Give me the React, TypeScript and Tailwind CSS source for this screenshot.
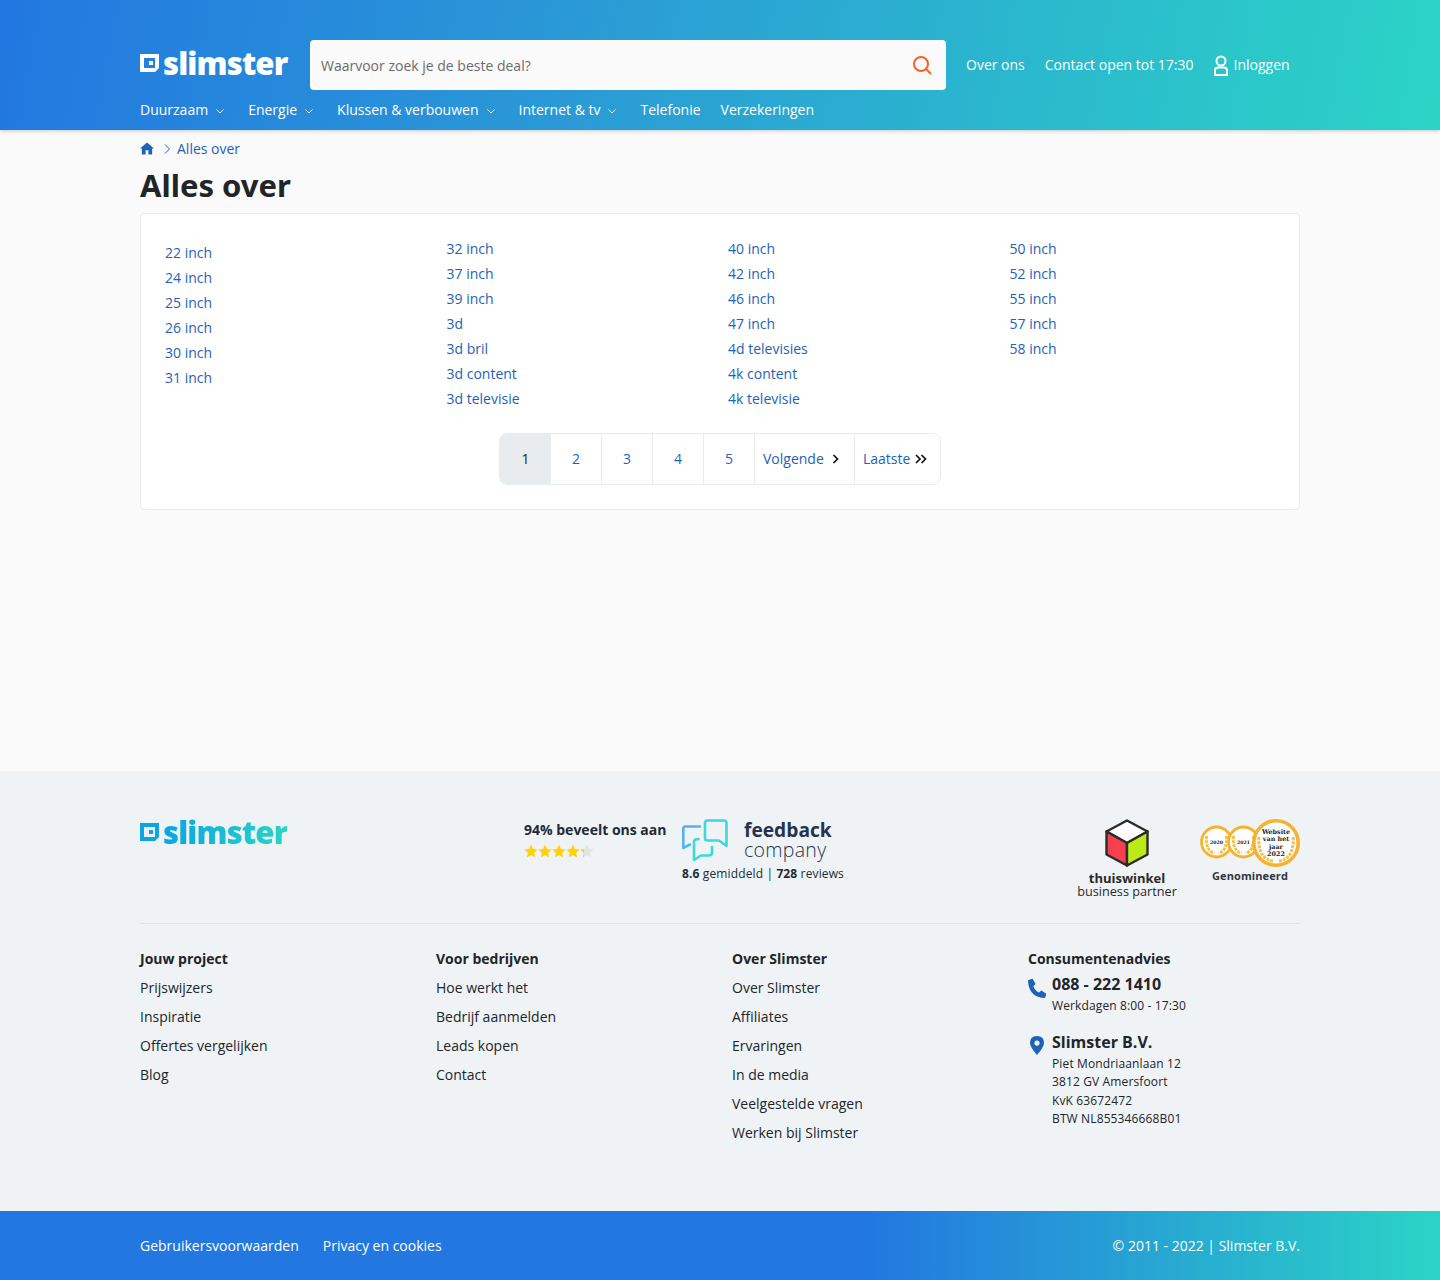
import React from "react";

const Logo = ({ grad, className = "" }: { grad: boolean; className?: string }) => (
  <div className={`flex h-[30px] w-[150px] items-center ${className}`}>
    <svg width="19" height="18" viewBox="0 0 19 18" className="shrink-0">
      <path
        fillRule="evenodd"
        d="M0 0H19V14L15 18H0ZM4 4V14H15V4Z"
        fill={grad ? "#0ca5e4" : "#fff"}
      />
      <rect x="9" y="7" width="4" height="4" fill={grad ? "#0ca5e4" : "#fff"} />
    </svg>
    <span
      className={`ml-[4px] font-['Open_Sans',sans-serif] text-[31px] leading-[30px] font-extrabold tracking-[-0.85px] ${
        grad
          ? "bg-gradient-to-r from-[#0ca5e4] to-[#2bd4c5] bg-clip-text text-transparent"
          : "text-white"
      }`}
    >
      slimster
    </span>
  </div>
);

const Chevron = () => (
  <svg width="8" height="5" viewBox="0 0 8 5" className="mt-[2px] mr-[4px] ml-[8px]" fill="none" stroke="#fff" strokeWidth="1">
    <path d="M0.5 0.5L4 4L7.5 0.5" />
  </svg>
);

const nav: [string, boolean][] = [
  ["Duurzaam", true],
  ["Energie", true],
  ["Klussen & verbouwen", true],
  ["Internet & tv", true],
  ["Telefonie", false],
  ["Verzekeringen", false],
];

const col1 = ["22 inch", "24 inch", "25 inch", "26 inch", "30 inch", "31 inch"];
const col2 = ["32 inch", "37 inch", "39 inch", "3d", "3d bril", "3d content", "3d televisie"];
const col3 = ["40 inch", "42 inch", "46 inch", "47 inch", "4d televisies", "4k content", "4k televisie"];
const col4 = ["50 inch", "52 inch", "55 inch", "57 inch", "58 inch"];

const LinkCol = ({ items, className = "" }: { items: string[]; className?: string }) => (
  <ul className={className}>
    {items.map((t) => (
      <li key={t} className="h-[25px] leading-[25px] text-[#1e62b8]">
        {t}
      </li>
    ))}
  </ul>
);

const FootCol = ({ title, items }: { title: string; items: string[] }) => (
  <div>
    <div className="h-[29px] leading-[29px] font-bold text-[#212529]">{title}</div>
    {items.map((t) => (
      <div key={t} className="h-[29px] leading-[29px] text-[#212529]">
        {t}
      </div>
    ))}
  </div>
);

const STAR = "M12 1l3.4 7.6 8.1.8-6.1 5.4 1.8 8.2L12 18.8 4.8 23l1.8-8.2L.5 9.4l8.1-.8z";
const Star = ({ fill }: { fill: string }) => (
  <svg width="14" height="14" viewBox="0 0 24 24">
    <defs>
      <linearGradient id="part" x1="0" x2="1" y1="0" y2="0">
        <stop offset="0.25" stopColor="#fdd20a" />
        <stop offset="0.25" stopColor="#dfe3e6" />
      </linearGradient>
    </defs>
    <path d={STAR} fill={fill} />
  </svg>
);

const Medal = ({ cx, cy, r, lines }: { cx: number; cy: number; r: number; lines: string[] }) => {
  const big = r > 20;
  const size = big ? 6.4 : 4.6;
  return (
    <g>
      <circle cx={cx} cy={cy} r={r} fill="#fff" stroke="#f4b331" strokeWidth={big ? 3.6 : 2.8} />
      <path
        d={`M${cx - r + 5} ${cy - 6}Q${cx - r + 4} ${cy + r - 6} ${cx - 2} ${cy + r - 4}`}
        fill="none"
        stroke="#f2c14e"
        strokeWidth="3"
        strokeDasharray="3 1"
      />
      <path
        d={`M${cx + r - 5} ${cy - 6}Q${cx + r - 4} ${cy + r - 6} ${cx + 2} ${cy + r - 4}`}
        fill="none"
        stroke="#f2c14e"
        strokeWidth="3"
        strokeDasharray="3 1"
      />
      {lines.map((l, i) => (
        <text
          key={l}
          x={cx}
          y={cy + 2 + (i - (lines.length - 1) / 2) * 7.2}
          textAnchor="middle"
          fontSize={size}
          fontWeight="700"
          fontFamily="'DejaVu Serif', serif"
          fill="#222"
        >
          {l}
        </text>
      ))}
    </g>
  );
};

export default function App() {
  return (
    <div className="flex min-h-[1280px] flex-col bg-[#fafafa] font-['Open_Sans',sans-serif] text-[14px] text-[#212529]">
      <header className="relative z-10 h-[130px] bg-[linear-gradient(100deg,#2277e0_0%,#2a9ad6_40%,#2bd4c5_100%)] shadow-[0_1px_4px_rgba(0,0,0,0.2)]">
        <div className="mx-auto w-[1160px] pt-[40px]">
          <div className="flex h-[50px] items-center">
            <Logo grad={false} className="mb-[4px]" />
            <div className="ml-[20px] flex h-[50px] w-[636px] items-center justify-between rounded-[4px] bg-[#fafafa] pr-[14px] pl-[11px]">
              <span className="text-[#6c6c6c]">Waarvoor zoek je de beste deal?</span>
              <svg width="20" height="20" viewBox="0 0 20 20" fill="none" stroke="#f4622a" strokeWidth="2">
                <circle cx="9" cy="9" r="7" />
                <path d="M14 14l4.5 4.5" strokeLinecap="round" />
              </svg>
            </div>
            <span className="mb-[2px] ml-[20px] text-white">Over ons</span>
            <span className="mb-[2px] ml-[20px] text-white">Contact open tot 17:30</span>
            <svg width="16" height="21" viewBox="0 0 16 21" fill="none" stroke="#fff" strokeWidth="2" className="ml-[19px]">
              <circle cx="8" cy="6" r="4.5" />
              <path d="M2 20V15.5Q2 12.5 5 12.5H11Q14 12.5 14 15.5V20Z" />
            </svg>
            <span className="mb-[2px] ml-[5px] text-white">Inloggen</span>
          </div>
          <nav className="mt-[10px] flex h-[20px] items-center gap-[20px] text-white">
            {nav.map(([t, c]) => (
              <span key={t} className="flex items-center leading-[20px]">
                {t}
                {c ? <Chevron /> : null}
              </span>
            ))}
          </nav>
        </div>
      </header>

      <main className="mx-auto h-[641px] w-[1160px]">
        <div className="flex h-[36px] items-center text-[#1e62b8]">
          <svg width="14" height="13" viewBox="0 0 15 13" className="mt-[1px]">
            <path d="M7.5 0L15 6.6H13V13H9V8.5H6V13H2V6.6H0Z" fill="#1e62b8" />
          </svg>
          <svg width="6" height="10" viewBox="0 0 6 10" fill="none" stroke="#1e62b8" className="mt-[1px] ml-[10px]">
            <path d="M1 0.5L5.5 5L1 9.5" />
          </svg>
          <span className="ml-[7px]">Alles over</span>
        </div>
        <h1 className="h-[47px] font-['Noto_Sans',sans-serif] text-[31px] leading-[38px] font-bold text-[#212529]">
          Alles over
        </h1>
        <section className="h-[297px] rounded-[5px] border border-[#e9ecef] bg-white px-[24px] pt-[22px]">
          <div className="grid h-[197px] w-[1126px] grid-cols-4">
            <LinkCol items={col1} className="pt-[4px]" />
            <LinkCol items={col2} />
            <LinkCol items={col3} />
            <LinkCol items={col4} />
          </div>
          <div className="flex justify-center">
            <div className="flex h-[52px] overflow-hidden rounded-[8px] border border-[#e9ecef] bg-white text-[#1e62b8]">
              <span className="flex w-[51px] items-center justify-center bg-[#e9ecef] pb-[2px] text-[#212529]">1</span>
              {["2", "3", "4", "5"].map((n) => (
                <span key={n} className="flex w-[51px] items-center justify-center border-r border-[#e9ecef] pb-[2px]">
                  {n}
                </span>
              ))}
              <span className="flex w-[100px] items-center border-r border-[#e9ecef] pb-[2px] pl-[8px]">
                Volgende
                <svg width="7" height="10" viewBox="0 0 7 10" fill="none" stroke="#111" strokeWidth="1.7" className="mt-[2px] ml-[8px]">
                  <path d="M1.5 1L5.5 5L1.5 9" />
                </svg>
              </span>
              <span className="flex w-[85px] items-center pb-[2px] pl-[8px]">
                Laatste
                <svg width="12" height="10" viewBox="0 0 12 10" fill="none" stroke="#111" strokeWidth="1.7" className="mt-[2px] ml-[5px]">
                  <path d="M1 1L5 5L1 9M6.5 1L10.5 5L6.5 9" />
                </svg>
              </span>
            </div>
          </div>
        </section>
      </main>

      <footer className="h-[440px] bg-[#eff3f6]">
        <div className="mx-auto w-[1160px]">
          <div className="flex h-[153px] border-b border-[#dde1e4] pt-[45px]">
            <Logo grad className="mt-[1px]" />
            <div className="ml-[234px] w-[158px] pt-[4px]">
              <div className="text-[14px] leading-[19px] font-bold text-[#212b36]">94% beveelt ons aan</div>
              <div className="mt-[5px] flex">
                <Star fill="#fdd20a" />
                <Star fill="#fdd20a" />
                <Star fill="#fdd20a" />
                <Star fill="#fdd20a" />
                <Star fill="url(#part)" />
              </div>
            </div>
            <div className="w-[240px] pt-[3px]">
              <div className="flex h-[44px] items-start">
                <svg width="46" height="44" viewBox="0 0 46 44" fill="none" strokeWidth="2.6" strokeLinejoin="round" strokeLinecap="round">
                  <defs>
                    <linearGradient id="fb" x1="0" x2="1" y1="0" y2="1">
                      <stop offset="0" stopColor="#5aa8f4" />
                      <stop offset="1" stopColor="#4fc5ee" />
                    </linearGradient>
                  </defs>
                  <path d="M18 7.5H3.5Q1.3 7.5 1.3 10V29L8 25.5" stroke="url(#fb)" />
                  <path d="M25.5 1.5H42Q44.5 1.5 44.5 4V27L37 21.5H25.5Q23 21.5 23 19V4Q23 1.5 25.5 1.5Z" stroke="#3fd6de" />
                  <path d="M16.5 20Q12 20 12 23V41L19 36.5H27Q30 36.5 30 33.5V28" stroke="#38dcd0" />
                </svg>
                <div className="mt-[1px] ml-[16px] text-[#26334d]">
                  <div className="text-[19.2px] leading-[20px] font-bold">feedback</div>
                  <div className="text-[19.5px] leading-[20px] font-light tracking-[0.3px]">company</div>
                </div>
              </div>
              <div className="mt-[1px] text-[12px] leading-[20px] tracking-[0.13px] text-[#212b36]">
                <b>8.6</b> gemiddeld | <b>728</b> reviews
              </div>
            </div>
            <div className="ml-[155px] flex w-[100px] flex-col items-center text-[#2a2a2a]">
              <svg width="44" height="48" viewBox="0 0 44 48" className="mt-[3px]">
                <path d="M22 1.5L42.5 12.5L22 24L1.5 12.5Z" fill="#fff" stroke="#2b2b2b" strokeWidth="2.4" strokeLinejoin="round" />
                <path d="M1.5 12.5L22 24V46.5L1.5 35.5Z" fill="#f6404f" stroke="#2b2b2b" strokeWidth="2.4" strokeLinejoin="round" />
                <path d="M42.5 12.5L22 24V46.5L42.5 35.5Z" fill="#bdea17" stroke="#2b2b2b" strokeWidth="2.4" strokeLinejoin="round" />
              </svg>
              <div className="mt-[5px] text-[13px] leading-[13px] font-bold">thuiswinkel</div>
              <div className="text-[12.7px] leading-[13px] whitespace-nowrap">business partner</div>
            </div>
            <div className="ml-[23px] flex w-[100px] flex-col items-center">
              <svg width="100" height="48" viewBox="0 0 100 48" className="mt-[3px]">
                <Medal cx={16.5} cy={23} r={15} lines={["2020"]} />
                <Medal cx={43.5} cy={23} r={15} lines={["2021"]} />
                <Medal cx={76} cy={24} r={22.2} lines={["Website", "van het", "jaar", "2022"]} />
              </svg>
              <div className="mt-[1px] text-[11px] leading-[15px] font-bold tracking-[0.1px] text-[#2f3640]">Genomineerd</div>
            </div>
          </div>
          <div className="grid grid-cols-[296px_296px_296px_272px] pt-[20px]">
            <FootCol title="Jouw project" items={["Prijswijzers", "Inspiratie", "Offertes vergelijken", "Blog"]} />
            <FootCol title="Voor bedrijven" items={["Hoe werkt het", "Bedrijf aanmelden", "Leads kopen", "Contact"]} />
            <FootCol
              title="Over Slimster"
              items={["Over Slimster", "Affiliates", "Ervaringen", "In de media", "Veelgestelde vragen", "Werken bij Slimster"]}
            />
            <div>
              <div className="h-[28px] leading-[29px] font-bold">Consumentenadvies</div>
              <div className="flex">
                <svg width="24" height="24" viewBox="0 0 24 24" className="mt-[6px] shrink-0">
                  <path
                    d="M1 1.7L4.6.7 7.6 6 5.4 8.3Q6.8 12.8 11 14.6L13.3 12.6 18.3 15.7 17.4 19.2Q17 20 16 20 1 19 0 3 0 2 1 1.7Z"
                    fill="#1e62b8"
                  />
                </svg>
                <div>
                  <div className="h-[25px] text-[16px] leading-[24px] font-bold">088 - 222 1410</div>
                  <div className="text-[12px] leading-[18px] tracking-[0.13px]">Werkdagen 8:00 - 17:30</div>
                </div>
              </div>
              <div className="mt-[15px] flex">
                <svg width="24" height="22" viewBox="0 0 24 22" className="mt-[6px] shrink-0">
                  <path
                    fillRule="evenodd"
                    d="M9 0Q16 0 16 7 16 11 9 19 2 11 2 7 2 0 9 0ZM9 4.5A2.6 2.6 0 1 0 9 9.7 2.6 2.6 0 1 0 9 4.5Z"
                    fill="#1e62b8"
                  />
                </svg>
                <div>
                  <div className="h-[25px] text-[16px] leading-[24px] font-bold">Slimster B.V.</div>
                  <div className="text-[12px] leading-[18.3px] tracking-[0.13px]">
                    <div>Piet Mondriaanlaan 12</div>
                    <div>3812 GV Amersfoort</div>
                    <div>KvK 63672472</div>
                    <div>BTW NL855346668B01</div>
                  </div>
                </div>
              </div>
            </div>
          </div>
        </div>
      </footer>

      <div className="h-[69px] bg-[linear-gradient(90deg,#2277e0_0%,#2277e0_60%,#2bd4c5_100%)]">
        <div className="mx-auto flex h-full w-[1160px] items-center text-white">
          <span>Gebruikersvoorwaarden</span>
          <span className="ml-[24px]">Privacy en cookies</span>
          <span className="ml-auto">© 2011 - 2022 | Slimster B.V.</span>
        </div>
      </div>
    </div>
  );
}
